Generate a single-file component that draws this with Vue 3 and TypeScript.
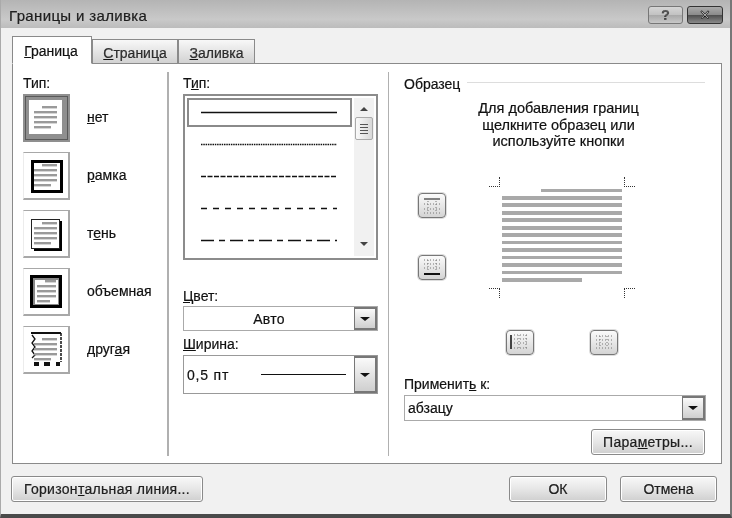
<script setup lang="ts">
interface Opt { key: string; before: string; hot: string; after: string }
const options: Opt[] = [
  { key: 'none', before: '', hot: 'н', after: 'ет' },
  { key: 'box', before: '', hot: 'р', after: 'амка' },
  { key: 'shadow', before: 'т', hot: 'е', after: 'нь' },
  { key: 'd3', before: 'объемная', hot: '', after: '' },
  { key: 'custom', before: 'друг', hot: 'а', after: 'я' },
]
const docLines = [
  { x: 19, w: 15, y: 12 }, { x: 11, w: 23, y: 17 }, { x: 11, w: 23, y: 22 },
  { x: 11, w: 23, y: 27 }, { x: 11, w: 17, y: 32 },
]
const styles = ['', '1.5 0.8', '5 1.5', '6 6', '13 5 6 5']
const previewLines = [
  { w: 81, m: 39 }, { w: 120, m: 0 }, { w: 120, m: 0 }, { w: 120, m: 0 }, { w: 120, m: 0 }, { w: 120, m: 0 },
  { w: 120, m: 0 }, { w: 120, m: 0 }, { w: 120, m: 0 }, { w: 120, m: 0 }, { w: 120, m: 0 }, { w: 120, m: 0 }, { w: 80, m: 0 },
]
const lineX = (key: string, x: number): number => (key === 'd3' ? x + 3 : x)
const lineW = (key: string, w: number): number => (key === 'd3' ? w - 4 : w)
</script>

<template>
  <div class="win">
    <header class="title">
      <span class="title-text">Границы и заливка</span>
      <div class="caps">
        <button class="cap help">?</button>
        <button class="cap close">✕</button>
      </div>
    </header>

    <div class="body">
      <nav class="tabs">
        <div class="tab active"><u>Г</u>раница</div>
        <div class="tab"><u>С</u>траница</div>
        <div class="tab"><u>З</u>аливка</div>
      </nav>

      <section class="panel">
        <div class="col col-a">
          <div class="label">Тип:</div>
          <div class="opts">
            <div v-for="o in options" :key="o.key" class="opt">
              <div class="thumb" :class="{ sel: o.key === 'none' }">
                <svg width="47" height="48" viewBox="0 0 47 48">
                  <g v-if="o.key === 'none'">
                    <rect x="0" y="0" width="47" height="48" fill="#8f8f8f" />
                    <rect x="2.5" y="2.5" width="42" height="43" fill="none" stroke="#222" stroke-dasharray="1 1" />
                    <rect x="6" y="6" width="33" height="34" fill="#fff" />
                  </g>
                  <rect v-if="o.key === 'box'" x="9.5" y="9.5" width="29" height="30" fill="#fff" stroke="#000" stroke-width="3" />
                  <g v-if="o.key === 'shadow'">
                    <rect x="11" y="11" width="28" height="30" fill="#000" />
                    <rect x="8.5" y="9.5" width="28" height="29" fill="#fff" stroke="#222" />
                  </g>
                  <g v-if="o.key === 'd3'">
                    <rect x="7" y="7" width="32" height="33" fill="#000" />
                    <rect x="10" y="10" width="26" height="27" fill="#888" />
                    <rect x="12" y="12" width="23" height="24" fill="#fff" />
                  </g>
                  <g v-if="o.key === 'custom'" fill="none" stroke="#111">
                    <path d="M8 7H38" stroke-width="2" />
                    <path d="M38 7V36" stroke-width="1.5" stroke-dasharray="3 1" />
                    <path d="M9 9l3 4-3 4 3 4-3 4 3 4-3 3" stroke-width="1.3" />
                    <path d="M11 38h5M21 38h6M33 38h4" stroke-width="4" />
                  </g>
                  <rect v-for="(l, i) in docLines" :key="i" :x="lineX(o.key, l.x)" :y="l.y" :width="lineW(o.key, l.w)" height="2.4" fill="#9a9a9a" />
                </svg>
              </div>
              <span class="opt-text">{{ o.before }}<u v-if="o.hot">{{ o.hot }}</u>{{ o.after }}</span>
            </div>
          </div>
        </div>

        <div class="col col-b">
          <div class="label">Т<u>и</u>п:</div>
          <div class="listbox">
            <div class="items">
              <div v-for="(d, i) in styles" :key="i" class="item" :class="{ selected: i === 0 }">
                <svg width="136" height="3" viewBox="0 0 136 3">
                  <line x1="0" y1="1.5" x2="136" y2="1.5" stroke="#111" :stroke-width="i === 0 ? 1.5 : 1.3" :stroke-dasharray="d || undefined" />
                </svg>
              </div>
            </div>
            <div class="scroll">
              <svg class="arr" width="10" height="6" viewBox="0 0 10 6"><path d="M1 5L5 1l4 4z" fill="#444" /></svg>
              <div class="grip">
                <i></i><i></i><i></i><i></i>
              </div>
              <svg class="arr down" width="10" height="6" viewBox="0 0 10 6"><path d="M1 1l4 4 4-4z" fill="#444" /></svg>
            </div>
          </div>
          <div class="label color-label"><u>Ц</u>вет:</div>
          <div class="combo short">
            <span class="val center">Авто</span>
            <span class="drop framed"><b></b></span>
          </div>
          <div class="label width-label"><u>Ш</u>ирина:</div>
          <div class="combo tall">
            <span class="val w-val">0,5 пт</span>
            <span class="w-line"></span>
            <span class="drop framed"><b></b></span>
          </div>
        </div>

        <div class="col col-c">
          <div class="legend"><span>Образец</span><i></i></div>
          <p class="hint">Для добавления границ<br />щелкните образец или<br />используйте кнопки</p>

          <div class="preview-wrap">
            <div class="side">
              <div class="mini">
                <svg width="28" height="25" viewBox="0 0 28 25">
                  <path d="M6 6h16" stroke="#111" stroke-width="1.2" />
                  <path d="M6 11h16M6 16h16M6 20h16M10 8v12M18 8v12" stroke="#777" stroke-dasharray="1 2" />
                </svg>
              </div>
              <div class="mini">
                <svg width="28" height="25" viewBox="0 0 28 25">
                  <path d="M6 5h16M6 9h16M6 13h16M10 5v12M18 5v12" stroke="#777" stroke-dasharray="1 2" />
                  <path d="M6 19h16" stroke="#111" stroke-width="2" />
                </svg>
              </div>
            </div>
            <div class="page-area">
              <div class="page">
                <span class="corner tl"></span><span class="corner tr"></span>
                <span class="corner bl"></span><span class="corner br"></span>
                <div
                  v-for="(l, i) in previewLines"
                  :key="i"
                  class="pline"
                  :style="{ width: l.w + 'px', marginLeft: l.m + 'px' }"
                ></div>
              </div>
              <div class="bottom-minis">
                <div class="mini">
                  <svg width="28" height="24" viewBox="0 0 28 24">
                    <path d="M5 5v14" stroke="#444" stroke-width="2" />
                    <path d="M8 5h15M8 9h15M8 13h15M8 18h15M13 5v14M20 5v14" stroke="#777" stroke-dasharray="1 2" />
                  </svg>
                </div>
                <div class="mini">
                  <svg width="28" height="24" viewBox="0 0 28 24">
                    <path d="M6 6h16M6 10h16M6 14h16M6 18h16M10 6v12M17 6v12" stroke="#777" stroke-dasharray="1 2" />
                  </svg>
                </div>
              </div>
            </div>
          </div>

          <div class="label apply-label">Применит<u>ь</u> к:</div>
          <div class="combo apply">
            <span class="val left">абзацу</span>
            <span class="drop framed"><b></b></span>
          </div>
          <div class="params-row">
            <button class="btn params">Пара<u>м</u>етры...</button>
          </div>
        </div>
      </section>

      <footer class="foot">
        <button class="btn hline">Горизон<u>т</u>альная линия...</button>
        <div class="foot-right">
          <button class="btn ok">ОК</button>
          <button class="btn cancel">Отмена</button>
        </div>
      </footer>
    </div>
  </div>
</template>

<style>
html, body { margin: 0; padding: 0; background: #fff; overflow: hidden; }
</style>

<style scoped>
.win {
  width: 732px;
  height: 518px;
  box-sizing: border-box;
  display: flex;
  flex-direction: column;
  background: #f1f1f1;
  border-bottom: 4px solid #4a4a4a;
  border-right: 2px solid #777;
  border-left: 1px solid #aaa;
  font-family: "Liberation Sans", Arial, sans-serif;
  font-size: 14px;
  color: #111;
  -webkit-text-stroke: 0.2px #111;
  filter: blur(0.5px);
}
.title {
  height: 28px;
  flex: none;
  display: flex;
  align-items: center;
  justify-content: space-between;
  background: linear-gradient(#b4b4b4, #c9c9c9 70%, #bcbcbc);
  padding: 0 7px 0 8px;
}
.title-text { font-size: 15px; color: #222; letter-spacing: 0.35px; padding-top: 3px; }
.caps { display: flex; gap: 4px; margin-top: 1px; }
.cap {
  width: 35px;
  height: 18px;
  padding: 0;
  border-radius: 3px;
  font: bold 14px "Liberation Sans", sans-serif;
  line-height: 16px;
}
.help {
  border: 1px solid #777;
  color: #555;
  background: linear-gradient(#d6d6d6, #c2c2c2 50%, #a8a8a8 51%, #c8c8c8);
}
.close {
  width: 36px;
  border: 1px solid #333;
  color: #eee;
  background: linear-gradient(#aaa, #8a8a8a 50%, #4e4e4e 51%, #8a8a8a);
}
.body { flex: 1; display: flex; flex-direction: column; padding: 8px 8px 0 10px; min-height: 0; }
.tabs { display: flex; height: 28px; flex: none; align-items: flex-end; padding-left: 1px; position: relative; z-index: 1; margin-bottom: -1px; }
.tab {
  height: 25px;
  line-height: 27px;
  width: 65px;
  box-sizing: border-box;
  text-align: center;
  border: 1px solid #8a8a8a;
  background: linear-gradient(#f8f8f8, #d2d2d2);
  color: #333;
}
.tab:nth-child(2) { width: 86px; }
.tab:nth-child(3) { width: 77px; margin-left: 0; }
.tab.active {
  width: 80px;
  height: 28px;
  line-height: 29px;
  background: #fff;
  border-bottom-color: #fff;
  color: #111;
  padding-right: 2px;
}
.panel {
  height: 401px;
  flex: none;
  box-sizing: border-box;
  margin-left: 1px;
  background: #fff;
  border: 1px solid #8a8a8a;
  padding: 10px 0 7px;
  display: flex;
}
.col { box-sizing: border-box; }
.col-a { width: 156px; padding-left: 10px; border-right: 2px solid #b0b0b0; margin-top: -2px; padding-top: 2px; }
.col-b { width: 220px; padding-left: 14px; border-right: 1px solid #b0b0b0; margin-top: -2px; padding-top: 2px; }
.col-c { flex: 1; padding: 0 16px 0 15px; min-width: 0; }
.label { height: 20px; line-height: 19px; }
.opts { display: flex; flex-direction: column; gap: 10px; }
.opt { display: flex; align-items: center; gap: 17px; }
.thumb {
  width: 47px;
  height: 48px;
  flex: none;
  box-sizing: border-box;
  border: 1px solid #a8a8a8;
  border-left-color: #ececec;
  border-right-width: 2px;
  border-bottom-width: 2px;
  overflow: hidden;
}
.thumb.sel { border: 0; }
.thumb svg { display: block; margin: -1px; }
.thumb.sel svg { margin: 0; }
.opt-text { color: #111; padding-bottom: 3px; }

.listbox {
  width: 195px;
  height: 166px;
  box-sizing: border-box;
  border: 2px solid #8c8c8c;
  display: flex;
  padding: 2px;
}
.items { flex: 1; display: flex; flex-direction: column; min-width: 0; }
.item { height: 32.4px; display: flex; align-items: center; justify-content: center; box-sizing: border-box; padding-right: 2px; }
.item svg { display: block; }
.item.selected { height: 29px; border: 2px solid #8a8a8a; margin-bottom: 2px; }
.scroll {
  width: 20px;
  flex: none;
  margin-left: 2px;
  background: #f1f1f1;
  display: flex;
  flex-direction: column;
  align-items: center;
  padding: 8px 0 9px;
}
.arr { display: block; flex: none; }
.arr.down { margin-top: auto; }
.grip {
  width: 18px;
  height: 23px;
  margin-top: 5px;
  box-sizing: border-box;
  border: 1px solid #aaa;
  border-radius: 2px;
  background: linear-gradient(90deg, #fafafa, #d8d8d8);
  display: flex;
  flex-direction: column;
  gap: 2px;
  align-items: center;
  justify-content: center;
}
.grip i { display: block; width: 8px; height: 1px; background: #555; }

.color-label { margin-top: 26px; height: 20px; line-height: 21px; }
.combo {
  width: 195px;
  box-sizing: border-box;
  display: flex;
  align-items: stretch;
  border: 1px solid #aaa;
  background: #fff;
}
.combo.short { height: 25px; }
.combo.tall { height: 39px; border-color: #999; }
.width-label { margin-top: 3px; height: 21px; line-height: 21px; }
.val { flex: 1; align-self: center; }
.val.center { text-align: center; letter-spacing: 0.3px; }
.val.left { padding-left: 3px; }
.w-val { flex: none; width: 77px; padding-left: 3px; box-sizing: border-box; letter-spacing: 0.8px; }
.w-line { flex: 1; align-self: center; height: 1px; background: #111; margin-right: 8px; }
.drop {
  width: 23px;
  flex: none;
  box-sizing: border-box;
  display: flex;
  align-items: center;
  justify-content: center;
  background: linear-gradient(#fafafa, #cfcfcf);
}
.drop.framed { border: 2px solid #777; border-left-width: 1px; }
.drop b {
  display: block;
  width: 0;
  height: 0;
  border-left: 5px solid transparent;
  border-right: 5px solid transparent;
  border-top: 4px solid #111;
}

.legend { display: flex; align-items: center; gap: 7px; height: 20px; }
.legend i { flex: 1; height: 1px; background: #ddd; margin-top: -3px; }
.hint { margin: 6px 0 0; text-align: center; font-size: 14.5px; line-height: 16.5px; color: #111; padding-left: 8px; }

.preview-wrap { display: flex; margin-top: 27px; height: 198px; }
.side { width: 84px; flex: none; padding: 16px 0 0 14px; box-sizing: border-box; display: flex; flex-direction: column; gap: 37px; }
.mini {
  width: 28px;
  height: 25px;
  flex: none;
  box-sizing: border-box;
  border: 1px solid #777;
  border-radius: 4px;
  background: linear-gradient(#fbfbfb, #d4d4d4);
  box-shadow: 0 0 0 1px #ddd;
  overflow: hidden;
}
.mini svg { display: block; margin: -1px; }
.page-area { flex: none; width: 136px; margin-left: 7px; }
.page { position: relative; width: 120px; padding-top: 12px; margin-left: 7px; display: flex; flex-direction: column; gap: 3.9px; }
.pline { height: 3.6px; background: #a9a9a9; }
.corner { position: absolute; width: 11px; height: 10px; border: 0 dotted #333; box-sizing: border-box; }
.corner.tl { left: -13px; top: 0; border-right-width: 1.5px; border-bottom-width: 1.5px; }
.corner.tr { right: -13px; top: 0; border-left-width: 1.5px; border-bottom-width: 1.5px; }
.corner.bl { left: -13px; bottom: -16px; border-right-width: 1.5px; border-top-width: 1.5px; }
.corner.br { right: -13px; bottom: -16px; border-left-width: 1.5px; border-top-width: 1.5px; }
.bottom-minis { display: flex; gap: 56px; margin-top: 48px; margin-left: 11px; }
.apply-label { height: 19px; }
.combo.apply { width: 302px; height: 26px; margin-top: 1px; }
.params-row { display: flex; justify-content: flex-end; margin-top: 8px; }

.btn {
  font: 14px "Liberation Sans", Arial, sans-serif;
  color: #222;
  height: 26px;
  padding: 0;
  box-sizing: border-box;
  border: 1px solid #8a8a8a;
  border-radius: 3px;
  background: linear-gradient(#f8f8f8, #e6e6e6 50%, #cfcfcf);
  box-shadow: inset 0 0 0 1px #fff;
}
.params { width: 114px; letter-spacing: 0.3px; }
.foot { display: flex; justify-content: space-between; align-items: flex-start; padding-top: 12px; }
.hline { width: 192px; letter-spacing: 0.3px; }
.foot-right { display: flex; gap: 13px; margin-right: 5px; }
.ok { width: 98px; }
.cancel { width: 97px; }
</style>
